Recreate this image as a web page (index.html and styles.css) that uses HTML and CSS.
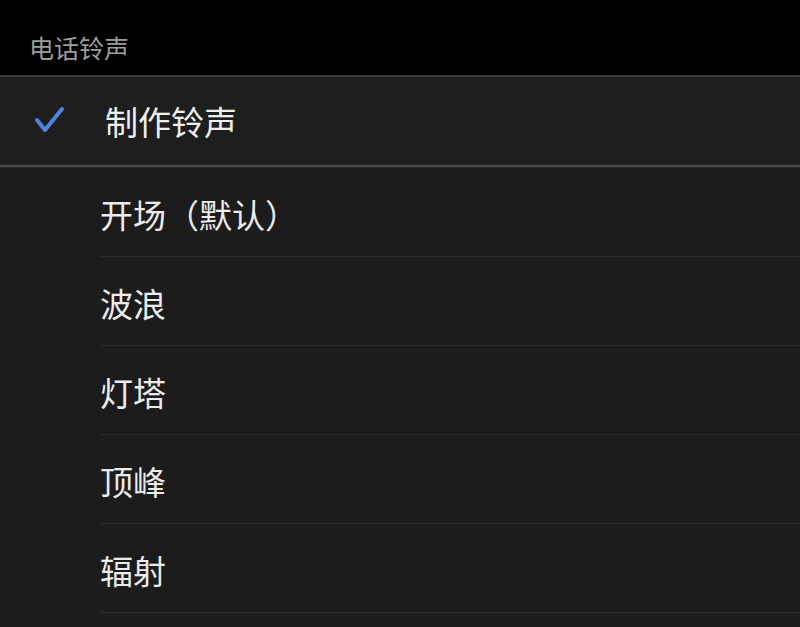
FILE: index.html
```html
<!DOCTYPE html>
<html lang="zh-CN">
<head>
<meta charset="utf-8">
<link rel="stylesheet" href="styles.css">
</head>
<body>
<div class="screen">
  <header class="title-bar">
    <span class="title">电话铃声</span>
  </header>
  <div class="selected-row">
    <svg class="check" width="34" height="30" viewBox="0 0 34 30">
      <path d="M4 15 L12 25 L29 4" fill="none" stroke="#4f83e6" stroke-width="4" stroke-linecap="round" stroke-linejoin="round"/>
    </svg>
    <span class="selected-label">制作铃声</span>
  </div>
  <div class="thick-divider"></div>
  <ul class="list">
    <li class="item"><span class="label">开场（默认）</span></li>
    <li class="item"><span class="label">波浪</span></li>
    <li class="item"><span class="label">灯塔</span></li>
    <li class="item"><span class="label">顶峰</span></li>
    <li class="item"><span class="label">辐射</span></li>
  </ul>
</div>
</body>
</html>
```
FILE: styles.css
```css
html, body {
  margin: 0;
  padding: 0;
  background: #1d1d1d;
}
body {
  font-family: "Noto Sans CJK SC", "Noto Sans", sans-serif;
  width: 800px;
  height: 627px;
  overflow: hidden;
}
.screen {
  display: flex;
  flex-direction: column;
}
.title-bar {
  height: 75px;
  background: #000;
  border-bottom: 2px solid #3a3a3a;
  display: flex;
  align-items: center;
  padding: 0 0 0 29px;
  box-sizing: content-box;
}
.title {
  color: #9c9c9c;
  font-size: 25px;
  line-height: 1;
  padding-top: 19px;
}
.selected-row {
  height: 87px;
  background: #1e1e1e;
  display: flex;
  align-items: center;
  padding-left: 33px;
}
.check {
  flex: none;
  margin-top: -2px;
}
.selected-label {
  margin-left: 38px;
  color: #f0f0f0;
  font-size: 33px;
  line-height: 1;
  padding-top: 2px;
}
.thick-divider {
  height: 4px;
  background: #484848;
  border-top: 1px solid #2c2c2c;
  border-bottom: 1px solid #2c2c2c;
  box-sizing: border-box;
}
.list {
  list-style: none;
  margin: 0;
  padding: 0;
  background: #1c1c1c;
}
.item {
  height: 88px;
  margin-left: 100px;
  border-bottom: 1px solid #2b2b2b;
  display: flex;
  align-items: center;
}
.label {
  color: #ececec;
  font-size: 33px;
  line-height: 1;
  padding-top: 5px;
}
```
